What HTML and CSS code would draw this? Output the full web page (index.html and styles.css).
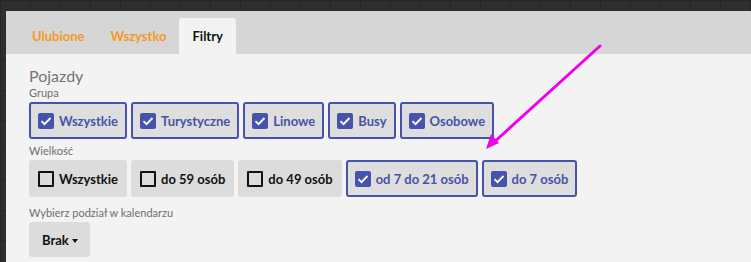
FILE: index.html
```html
<!DOCTYPE html>
<html lang="pl">
<head>
    <meta charset="UTF-8">
    <title>Filtry</title>
    <link rel="stylesheet" href="styles.css">
</head>
<body>
    <div class="panel">
        <div class="tabs">
            <a class="tab" href="#">Ulubione</a>
            <a class="tab" href="#">Wszystko</a>
            <a class="tab active" href="#">Filtry</a>
        </div>
        <div class="content">
            <h2>Pojazdy</h2>
            <div class="label">Grupa</div>
            <div class="row">
                <button class="chk on"><span class="box"></span>Wszystkie</button>
                <button class="chk on"><span class="box"></span>Turystyczne</button>
                <button class="chk on"><span class="box"></span>Linowe</button>
                <button class="chk on"><span class="box"></span>Busy</button>
                <button class="chk on"><span class="box"></span>Osobowe</button>
            </div>
            <div class="label">Wielkość</div>
            <div class="row">
                <button class="chk"><span class="box"></span>Wszystkie</button>
                <button class="chk"><span class="box"></span>do 59 osób</button>
                <button class="chk"><span class="box"></span>do 49 osób</button>
                <button class="chk on"><span class="box"></span>od 7 do 21 osób</button>
                <button class="chk on"><span class="box"></span>do 7 osób</button>
            </div>
            <div class="label spaced">Wybierz podział w kalendarzu</div>
            <button class="dropdown">Brak <span class="caret"></span></button>
        </div>
    </div>

    <svg class="arrow" width="751" height="262" viewBox="0 0 751 262">
        <line x1="600" y1="46" x2="492" y2="144" stroke="#ee00ee" stroke-width="3" stroke-linecap="round"/>
        <polygon points="486,149 491,134 499,143" fill="#ee00ee"/>
    </svg>
</body>
</html>
```

FILE: styles.css
```css
body{
    margin:0;
    height:262px;
    overflow:hidden;
    background-color:#2e2e2e;
    background-image:
        linear-gradient(90deg, #262626 1px, transparent 1px),
        linear-gradient(#262626 1px, transparent 1px);
    background-size:30px 30px;
    font-family: Lato, 'Noto Sans', sans-serif;
    position:relative;
}

.panel{
    margin:11px 0 0 6px;
    background:#f3f3f3;
    height:251px;
    overflow:hidden;
}

.tabs{
    background:#d6d6d6;
    display:flex;
    padding:7px 0 0 13px;
    height:36px;
}

.tab{
    display:flex;
    align-items:center;
    padding:0 13px;
    font-size:13px;
    font-weight:bold;
    color:#f39a2b;
    text-decoration:none;
    border-radius:3px 3px 0 0;
}

.tab.active{
    background:#f3f3f3;
    color:#111;
}

.content{
    padding:12px 23px;
}

h2{
    margin:0;
    font-size:16px;
    font-weight:normal;
    color:#747474;
    line-height:20px;
}

.label{
    font-size:11px;
    color:#6e6e6e;
    line-height:14px;
    margin-bottom:2px;
}

.label.spaced{
    margin-top:9px;
}

.row{
    display:flex;
    gap:4px;
    margin-bottom:5px;
}

.chk{
    display:flex;
    align-items:center;
    gap:5px;
    height:37px;
    padding:0 7px;
    border:2px solid transparent;
    border-radius:3px;
    background:#dcdcdc;
    font-family:inherit;
    font-size:13px;
    font-weight:bold;
    color:#111;
}

.chk .box{
    width:12px;
    height:12px;
    border:2px solid #111;
    border-radius:1px;
}

.chk.on{
    border-color:#4553a8;
    color:#4753a6;
    background:#dedede;
}

.chk.on .box{
    width:16px;
    height:16px;
    border:0;
    border-radius:2px;
    background:#4553ad url("data:image/svg+xml,%3Csvg xmlns='http://www.w3.org/2000/svg' viewBox='0 0 16 16'%3E%3Cpath d='M3.5 8.2l3 3 6-6.2' fill='none' stroke='white' stroke-width='1.8'/%3E%3C/svg%3E") center/16px 16px no-repeat;
}

.dropdown{
    height:35px;
    padding:0 12px 0 13px;
    border:0;
    border-radius:3px;
    background:#dcdcdc;
    font-family:inherit;
    font-size:13px;
    font-weight:bold;
    color:#111;
}

.caret{
    display:inline-block;
    border-left:3px solid transparent;
    border-right:3px solid transparent;
    border-top:4px solid #111;
    vertical-align:middle;
}

.arrow{
    position:absolute;
    left:0;
    top:0;
    pointer-events:none;
}
```
